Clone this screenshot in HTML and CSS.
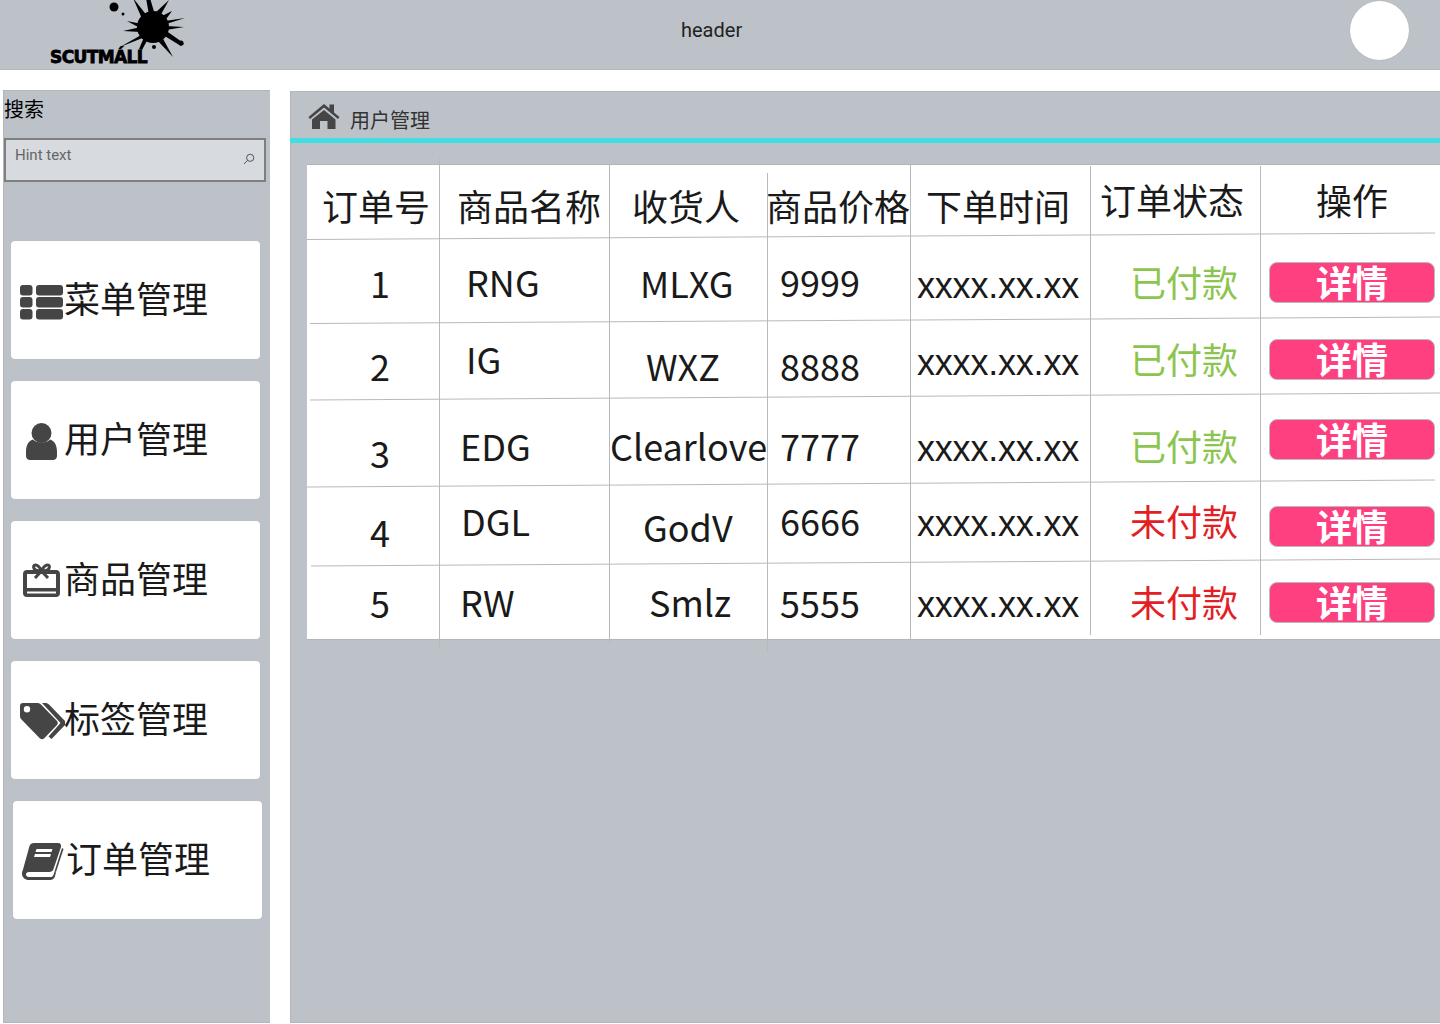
FILE: index.html
```html
<!DOCTYPE html>
<html lang="zh">
<head>
<meta charset="utf-8">
<title>用户管理</title>
<link rel="stylesheet" href="styles.css">
</head>
<body>
<header class="topbar">
  <div class="logo">
    <svg class="logo-splat" viewBox="100 0 90 70" width="90" height="70">
      <circle cx="153" cy="27" r="16"/>
      <polygon points="133,-2 148,17 143,21"/>
      <polygon points="146,-2 150,-2 155,15 149,15"/>
      <polygon points="169,0 159,18 154,14"/>
      <polygon points="172,11 164,22 160,17"/>
      <polygon points="185,18 166,24 165,21"/>
      <polygon points="184,27 166,30 166,26"/>
      <polygon points="182,42 184,44 181,46 163,35 165,30"/>
      <polygon points="173,57 157,40 162,37"/>
      <polygon points="123,31 141,27 141,32"/>
      <polygon points="127,21 142,24 140,28"/>
      <polygon points="120,47 143,34 145,37"/>
      <polygon points="145,35 149,37 142,50 139,49"/>
      <circle cx="114" cy="7" r="4.500"/>
      <circle cx="123" cy="14" r="1.500"/>
      <circle cx="154" cy="47" r="2"/>
      <circle cx="181" cy="43" r="2.500"/>
    </svg>
    <span class="logo-text">SCUTMÁLL</span>
  </div>
  <div class="topbar-title">header</div>
  <div class="avatar"></div>
</header>

<div class="layout">
  <aside class="sidebar">
    <div class="search-title">搜索</div>
    <div class="search-box">
      <span class="search-hint">Hint text</span>
      <svg class="search-icon" viewBox="0 0 12 12" width="12" height="12">
        <circle cx="7.200" cy="4.800" r="3.600"/>
        <path d="M4.600 7.400 1 11"/>
      </svg>
    </div>
    <nav class="menu">
      <a class="card">
        <svg class="card-icon" viewBox="11 275 54 50">
          <rect x="20" y="285" width="12.500" height="10.500" rx="3"/>
          <rect x="20" y="297" width="12.500" height="10.500" rx="3"/>
          <rect x="20" y="309" width="12.500" height="10.500" rx="3"/>
          <rect x="36" y="285" width="27" height="10.500" rx="3"/>
          <rect x="36" y="297" width="27" height="10.500" rx="3"/>
          <rect x="36" y="309" width="27" height="10.500" rx="3"/>
        </svg>
        <span>菜单管理</span>
      </a>
      <a class="card">
        <svg class="card-icon" viewBox="11 415 54 50">
          <circle cx="41.500" cy="433" r="10"/>
          <path d="M33 439.500C36 443.500 47 443.500 50 439.500 55 441 57 446 57 452V456C57 458.500 55 460 53 460H30C28 460 26 458.500 26 456V452C26 446 28 441 33 439.500Z"/>
        </svg>
        <span>用户管理</span>
      </a>
      <a class="card">
        <svg class="card-icon" viewBox="11 555 54 50">
          <path fill-rule="evenodd" d="M27 570H56C58.500 570 60 571.500 60 574V593C60 595.500 58.500 597 56 597H27C24.500 597 23 595.500 23 593V574C23 571.500 24.500 570 27 570ZM27 574V588H56V574ZM27 591.500V593.500H56V591.500Z"/>
          <path class="bow" d="M41.500 570.500C37.500 563 32 564 34 568.500 35 570.500 38 571 41.500 571 45 571 48 570.500 49 568.500 51 564 45.500 563 41.500 570.500ZM41.500 571 35 578M41.500 571 48 578"/>
        </svg>
        <span>商品管理</span>
      </a>
      <a class="card">
        <svg class="card-icon" viewBox="11 695 54 50">
          <path fill-rule="evenodd" d="M23 703H38C39 703 40 703.500 41 704.500L57 721C58 722 58 724 57 725L44 738.500C43 739.500 41 739.500 40 738.500L22 720C21 719 20 718 20 716V706C20 704 21 703 23 703ZM27 706A3.200 3.200 0 1 0 27 712.400 3.200 3.200 0 0 0 27 706Z"/>
          <path d="M42 703H46C47 703 48 703.500 49 704.500L65 721C66 722 66 724 65 725L51.500 739 48.500 736.500 60.500 723 42 703Z"/>
        </svg>
        <span>标签管理</span>
      </a>
      <a class="card card-shifted">
        <svg class="card-icon" viewBox="13 835 54 50">
          <path fill-rule="evenodd" d="M34 843H58C60.500 843 61.500 845 61 847L53.500 869C53 871 51.500 872 49 872H29C26.500 872 26 873.500 26 874.500 26 876 27 877 29 877H50C52 877 53 876.500 53.800 874L54.500 871.500 56 872.500 55 876C54.500 878.500 52.500 880 50 880H29C25 880 22 877.500 22 873.500 22 872 22.500 871 23 869.500L29.500 846C30 844 32 843 34 843ZM36.500 849 35.500 852H51.500L52.500 849ZM35 854 34 857H50L51 854Z"/>
          <path d="M62 848 63.500 849 56 872 54.500 871.500Z"/>
        </svg>
        <span>订单管理</span>
      </a>
    </nav>
  </aside>

  <main class="content">
    <div class="crumb">
      <svg class="crumb-icon" viewBox="308 104 32 27" width="32" height="27">
        <path d="M324 105 308.500 118 310 120 324 108.500 338 120 339.500 118 334 113.500V105.500H329.500V109.500Z"/>
        <path fill-rule="evenodd" d="M324 111 312 120.500V130H320V122H327.500V130H335.500V120.500Z"/>
      </svg>
      <span>用户管理</span>
    </div>

    <div class="table-wrap">
      <div class="table">
        <div class="cell x16 y23">订单号</div>
        <div class="cell x18 y23">商品名称</div>
        <div class="cell x23 y23">收货人</div>
        <div class="cell xn1 y23">商品价格</div>
        <div class="cell x16 y23">下单时间</div>
        <div class="cell x10 y17">订单状态</div>
        <div class="cell x56 y17">操作</div>

        <div class="cell x64 y28">1</div>
        <div class="cell x27 y27">RNG</div>
        <div class="cell x31 y28">MLXG</div>
        <div class="cell x13 y27">9999</div>
        <div class="cell date x7 y30">xxxx.xx.xx</div>
        <div class="cell paid x40 y27">已付款</div>
        <div class="cell x9 y25"><button class="detail">详情</button></div>

        <div class="cell x64 y27">2</div>
        <div class="cell x27 y20">IG</div>
        <div class="cell x37 y27">WXZ</div>
        <div class="cell x13 y27">8888</div>
        <div class="cell date x7 y23">xxxx.xx.xx</div>
        <div class="cell paid x40 y20">已付款</div>
        <div class="cell x9 y18"><button class="detail">详情</button></div>

        <div class="cell x64 y37">3</div>
        <div class="cell x21 y30">EDG</div>
        <div class="cell x1 y30">Clearlove</div>
        <div class="cell x13 y30">7777</div>
        <div class="cell date x7 y32">xxxx.xx.xx</div>
        <div class="cell paid x40 y30">已付款</div>
        <div class="cell x9 y21"><button class="detail">详情</button></div>

        <div class="cell x64 y29">4</div>
        <div class="cell x22 y18">DGL</div>
        <div class="cell x34 y24">GodV</div>
        <div class="cell x13 y18">6666</div>
        <div class="cell date x7 y20">xxxx.xx.xx</div>
        <div class="cell unpaid x40 y18">未付款</div>
        <div class="cell x9 y21"><button class="detail">详情</button></div>

        <div class="cell x64 y22">5</div>
        <div class="cell x21 y21">RW</div>
        <div class="cell x40 y21">Smlz</div>
        <div class="cell x13 y22">5555</div>
        <div class="cell date x7 y23">xxxx.xx.xx</div>
        <div class="cell unpaid x40 y21">未付款</div>
        <div class="cell x9 y19"><button class="detail">详情</button></div>
      </div>

      <svg class="rules" viewBox="0 0 1133 490" width="1133" height="490">
        <path d="M132.500 -7V482M302.500 0V478M460.500 8V487M603.500 0V474M783.500 1V470M953.500 1V470"/>
        <path d="M0 74.500 1128 68M3 158.500 1133 152M3 235 1133 228M0 322 1128 315M4 401 1133 394"/>
      </svg>
    </div>
  </main>
</div>
</body>
</html>
```
FILE: styles.css
```css
* { box-sizing: border-box; }

html, body {
  margin: 0;
  height: 1024px;
  overflow: hidden;
  background: #fff;
}

body {
  font-family: "Noto Sans CJK SC", "Noto Sans", sans-serif;
  color: #1a1a1a;
}

/* top bar */
.topbar {
  display: flex;
  align-items: center;
  height: 70px;
  padding-bottom: 9px;
  background: #bdc2c9;
  border-bottom: 1px solid #b2b5ba;
}

.logo {
  position: relative;
  flex: none;
  align-self: flex-start;
  width: 190px;
  height: 69px;
  overflow: hidden;
}

.logo-splat {
  display: block;
  margin-left: 100px;
  fill: #000;
}

.logo-text {
  position: absolute;
  left: 50px;
  top: 45px;
  font-family: "DejaVu Sans", sans-serif;
  font-weight: 700;
  font-size: 17px;
  line-height: 24px;
  letter-spacing: -0.6px;
  color: #000;
  -webkit-text-stroke: 0.8px #000;
  white-space: nowrap;
}

.topbar-title {
  margin-left: 491px;
  font-family: Roboto, sans-serif;
  font-size: 20px;
  line-height: 24px;
  color: #222;
}

.avatar {
  width: 59px;
  height: 59px;
  margin-left: 608px;
  border-radius: 50%;
  background: #fff;
  box-shadow: 0 0 1px #999;
}

/* columns */
.layout {
  display: flex;
  align-items: flex-start;
  padding: 20px 0 0 3px;
}

.sidebar {
  flex: none;
  width: 267px;
  height: 933px;
  background: #bdc2c9;
  border: 1px solid #b2b5ba;
  border-right-width: 0;
}

.search-title {
  height: 47px;
  padding-top: 6px;
  font-size: 20px;
  line-height: 24px;
  color: #000;
}

.search-box {
  display: flex;
  align-items: flex-start;
  justify-content: space-between;
  width: 262px;
  height: 44px;
  padding: 6px 9px 0 9px;
  background: #d7dadf;
  border: 2px solid #7f7f7f;
}

.search-hint {
  font-family: Roboto, sans-serif;
  font-size: 15px;
  line-height: 18px;
  color: #666;
}

.search-icon {
  margin-top: 7px;
  fill: none;
  stroke: #555;
  stroke-width: 1;
}

.menu {
  display: flex;
  flex-direction: column;
  gap: 22px;
  margin: 59px 0 0 7px;
}

.card {
  display: flex;
  align-items: center;
  width: 249px;
  height: 118px;
  background: #fff;
  border-radius: 4px;
  box-shadow: 0 0 1px #aaa;
  font-size: 36px;
  line-height: 44px;
  color: #1a1a1a;
}

.card span {
  margin: 0 0 6px -1px;
}

.card-shifted { margin-left: 2px; }

.card-icon {
  flex: none;
  width: 54px;
  height: 50px;
  fill: #454545;
}

.bow {
  fill: #fff;
  stroke: #454545;
  stroke-width: 3;
}

/* main */
.content {
  flex: 1;
  height: 932px;
  margin: 1px 0 0 20px;
  background: #bdc2c9;
  border-top: 1px solid #b2b5ba;
  border-left: 1px solid #b2b5ba;
  border-bottom: 1px solid #b2b5ba;
  min-width: 0;
}

.crumb {
  display: flex;
  align-items: flex-end;
  gap: 10px;
  height: 51px;
  margin-left: -1px;
  padding: 0 0 5px 18px;
  border-bottom: 5px solid #40dde3;
  font-size: 20px;
  line-height: 26px;
  color: #333;
}

.crumb-icon {
  flex: none;
  margin-bottom: 3px;
  fill: #454545;
}

.table-wrap {
  position: relative;
  margin: 22px 0 0 16px;
}

.table {
  display: grid;
  grid-template-columns: 133px 170px 158px 143px 180px 170px 179px;
  grid-template-rows: 72px 84px 77px 87px 78px 76px;
  width: 1133px;
  background: #fff;
  box-shadow: 0 1px 0 #b2b5ba, 0 -1px 0 #b2b5ba;
  font-size: 36px;
  line-height: 34px;
  text-indent: -1px;
  white-space: nowrap;
}

.rules {
  position: absolute;
  left: 0;
  top: 0;
  overflow: visible;
  fill: none;
  stroke: #b9b9b9;
  stroke-width: 1;
}

.date {
  font-family: "Liberation Sans", sans-serif;
  line-height: 38px;
  letter-spacing: -0.2px;
}

.paid { color: #8bc54f; }
.unpaid { color: #e31e24; }

.detail {
  display: block;
  width: 166px;
  height: 41px;
  margin-left: -1px;
  padding: 0 0 3px;
  background: #fe4080;
  border: 1px solid #bbb;
  border-radius: 8px;
  color: #fff;
  text-indent: 0;
  font: 700 36px/33px "Noto Sans CJK SC", sans-serif;
}

/* per-cell placement: the mock-up's cells are hand-placed */
.xn1 { margin-left: -1px; }
.x1 { padding-left: 1px; }
.x7 { padding-left: 7px; }
.x9 { padding-left: 9px; }
.x10 { padding-left: 10px; }
.x13 { padding-left: 13px; }
.x16 { padding-left: 16px; }
.x18 { padding-left: 18px; }
.x21 { padding-left: 21px; }
.x22 { padding-left: 22px; }
.x23 { padding-left: 23px; }
.x27 { padding-left: 27px; }
.x31 { padding-left: 31px; }
.x34 { padding-left: 34px; }
.x37 { padding-left: 37px; }
.x40 { padding-left: 40px; }
.x56 { padding-left: 56px; }
.x64 { padding-left: 64px; }

.y17 { padding-top: 17px; }
.y18 { padding-top: 18px; }
.y19 { padding-top: 19px; }
.y20 { padding-top: 20px; }
.y21 { padding-top: 21px; }
.y22 { padding-top: 22px; }
.y23 { padding-top: 23px; }
.y24 { padding-top: 24px; }
.y25 { padding-top: 25px; }
.y27 { padding-top: 27px; }
.y28 { padding-top: 28px; }
.y29 { padding-top: 29px; }
.y30 { padding-top: 30px; }
.y32 { padding-top: 32px; }
.y37 { padding-top: 37px; }
```
